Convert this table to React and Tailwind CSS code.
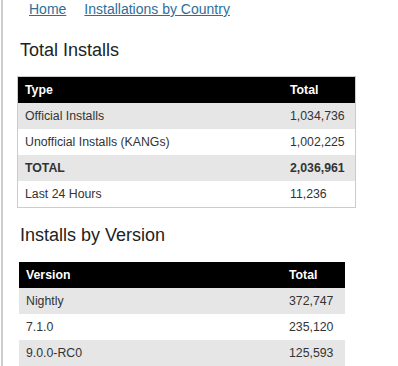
import React from "react";

const totals = [
  { label: "Official Installs", value: "1,034,736", shade: true },
  { label: "Unofficial Installs (KANGs)", value: "1,002,225" },
  { label: "TOTAL", value: "2,036,961", shade: true, bold: true },
  { label: "Last 24 Hours", value: "11,236" },
];

const versions = [
  { label: "Nightly", value: "372,747", shade: true },
  { label: "7.1.0", value: "235,120" },
  { label: "9.0.0-RC0", value: "125,593", shade: true },
];

function StatsTable({ head, rows, className, cols }) {
  return (
    <div className={className}>
      <div className={`grid ${cols} h-[26px] items-center bg-black text-white font-bold`}>
        <div className="pl-[7px]">{head}</div>
        <div className="pl-[7px]">Total</div>
      </div>
      {rows.map((r) => (
        <div
          key={r.label}
          className={`grid ${cols} h-[26px] items-center ${r.shade ? "bg-[#e6e6e6]" : "bg-white"} ${r.bold ? "font-bold" : ""}`}
        >
          <div className="pl-[7px]">{r.label}</div>
          <div className="pl-[7px]">{r.value}</div>
        </div>
      ))}
    </div>
  );
}

export default function App() {
  return (
    <div className="min-h-[366px] bg-white flex font-['Liberation_Sans',Arial,sans-serif] text-[#333]">
      <div className="w-[1px]" />
      <div className="w-[2px] bg-[#cdcdcd]" />
      <div className="flex-1">
        <nav className="pt-[1px] pl-[26px] h-[17px] flex gap-[18px] text-[14px] leading-[16px]">
          <a href="#" className="text-[#2f6e97] underline">Home</a>
          <a href="#" className="text-[#2f6e97] underline">Installations by Country</a>
        </nav>

        <h2 className="mt-[22px] pl-[17px] text-[18px] leading-[22px] text-[#222]">Total Installs</h2>
        <StatsTable
          head="Type"
          rows={totals}
          cols="grid-cols-[265px_1fr]"
          className="mt-[15px] ml-[14px] w-[339px] border border-[#cccccc] text-[12.3px]"
        />

        <h2 className="mt-[16px] pl-[17px] text-[18px] leading-[22px] text-[#222]">Installs by Version</h2>
        <StatsTable
          head="Version"
          rows={versions}
          cols="grid-cols-[263px_1fr]"
          className="mt-[16px] ml-[16px] w-[326px] text-[12.3px]"
        />
      </div>
    </div>
  );
}
